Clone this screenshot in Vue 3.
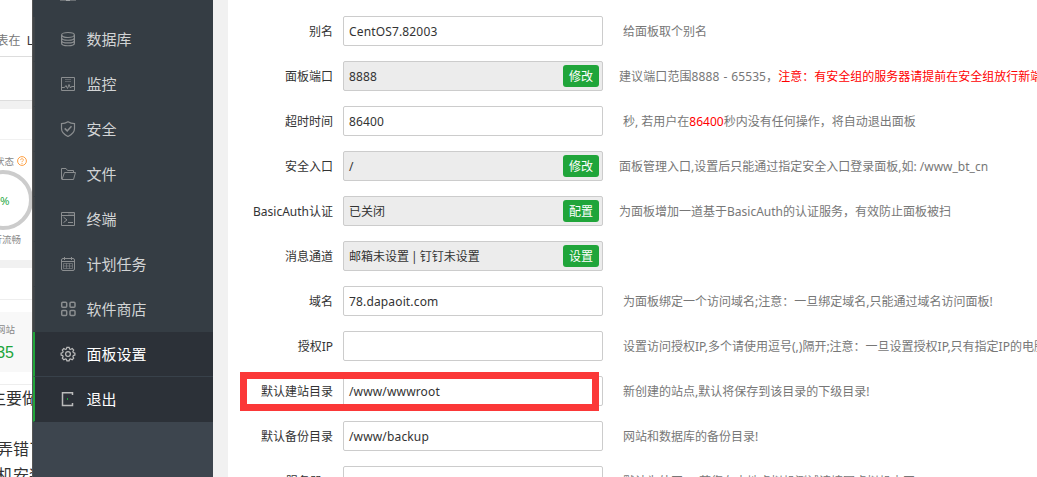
<script setup>
const menus = [
  { name: '数据库', icon: 'database' },
  { name: '监控', icon: 'monitor' },
  { name: '安全', icon: 'shield' },
  { name: '文件', icon: 'folder' },
  { name: '终端', icon: 'terminal' },
  { name: '计划任务', icon: 'calendar' },
  { name: '软件商店', icon: 'store' },
  { name: '面板设置', icon: 'gear', active: true },
  { name: '退出', icon: 'exit', active: true }
]

const rows = [
  { label: '别名', value: 'CentOS7.82003', latin: true, tips: [{ text: '给面板取个别名' }] },
  {
    label: '面板端口',
    value: '8888',
    latin: true,
    btn: '修改',
    tips: [{ text: '建议端口范围8888 - 65535，', wide: true }, { text: '注意：有安全组的服务器请提前在安全组放行新端口', red: true }]
  },
  {
    label: '超时时间',
    value: '86400',
    latin: true,
    tips: [{ text: '秒, 若用户在' }, { text: '86400', red: true }, { text: '秒内没有任何操作，将自动退出面板' }]
  },
  { label: '安全入口', value: '/', latin: true, btn: '修改', tips: [{ text: '面板管理入口,设置后只能通过指定安全入口登录面板,如: /www_bt_cn' }] },
  { label: 'BasicAuth认证', value: '已关闭', btn: '配置', tips: [{ text: '为面板增加一道基于BasicAuth的认证服务，有效防止面板被扫' }] },
  { label: '消息通道', value: '邮箱未设置 | 钉钉未设置', btn: '设置', tips: [] },
  { label: '域名', value: '78.dapaoit.com', latin: true, tips: [{ text: '为面板绑定一个访问域名;注意：一旦绑定域名,只能通过域名访问面板!' }] },
  { label: '授权IP', value: '', tips: [{ text: '设置访问授权IP,多个请使用逗号(,)隔开;注意：一旦设置授权IP,只有指定IP的电脑能访问面板!' }] },
  { label: '默认建站目录', value: '/www/wwwroot', latin: true, marked: true, tips: [{ text: '新创建的站点,默认将保存到该目录的下级目录!' }] },
  { label: '默认备份目录', value: '/www/backup', latin: true, tips: [{ text: '网站和数据库的备份目录!' }] },
  { label: '服务器IP', value: '', tips: [{ text: '默认为外网IP, 若您在本地虚拟机测试请填写虚拟机内网IP!' }] }
]
</script>

<template>
  <div class="page">
    <div class="behind">
      <div class="notice"><span>表在&nbsp; <b>L</b></span></div>
      <div class="blank"></div>
      <div class="gap"></div>
      <div class="panel-head"></div>
      <div class="status">
        <div class="status-title">
          <span>状态</span>
          <svg width="10" height="10" viewBox="0 0 10 10" fill="none" stroke="#ff9f40">
            <circle cx="5" cy="5" r="4.4" />
            <path d="M3.6 4.1c0-2 2.9-1.8 2.8 0C6.3 5 5 5 5 6.2M5 7v1" stroke-width=".9" />
          </svg>
        </div>
        <div class="ring"><span>0%</span></div>
        <div class="status-foot">运行流畅</div>
      </div>
      <div class="gap"></div>
      <div class="overview-head"></div>
      <div class="overview">
        <div class="site-label">网站</div>
        <div class="site-count">35</div>
      </div>
      <div class="article">
        <p class="line-a">主要做</p>
        <p class="line-b">弄错了</p>
        <p class="line-c">机安装</p>
      </div>
    </div>

    <div class="sidebar">
      <div class="menu-top">
        <svg width="16" height="2" viewBox="0 0 16 2"><path d="M0 0h16v1H0z" fill="#686d71" /><path d="M6 0h4v1H6z" fill="#a0a3a5" /></svg>
      </div>
      <div v-for="m in menus" :key="m.name" class="menu-item" :class="{ active: m.active }">
        <svg class="icon" width="16" height="16" viewBox="0 0 16 16" fill="none" stroke="currentColor">
          <g v-if="m.icon === 'database'" stroke-width="1.2">
            <ellipse cx="8" cy="4" rx="6.4" ry="2.5" />
            <path d="M1.6 4v8.2c0 3.4 12.8 3.4 12.8 0V4M1.6 6.7c0 3.4 12.8 3.4 12.8 0M1.6 9.4c0 3.4 12.8 3.4 12.8 0" />
          </g>
          <g v-else-if="m.icon === 'monitor'">
            <path d="M1.5 1.5h13v13h-13z" />
            <path d="M5 3.5h6M5 5.5h6" opacity=".5" />
            <path d="M2 11.5h2.500l1.500-2 1.500 3 1.500-4 1.500 3.500 1-1.500H14" />
          </g>
          <g v-else-if="m.icon === 'shield'" stroke-width="1.2">
            <path d="M8 .8c2 1.300 4 1.800 6.500 1.800v5c0 3.900-3 6.300-6.500 7.900C4.500 13.900 1.500 11.500 1.500 7.600v-5C4 2.600 6 2.100 8 .8z" />
            <path d="M4.700 7.400l2.500 2.500 4.300-4.700" stroke-width="1.500" />
          </g>
          <g v-else-if="m.icon === 'folder'">
            <path d="M2 13.500l-.5-.5V2.500H6l1.500 2h6v2M2 13.500l2.500-7h11l-2 7z" />
          </g>
          <g v-else-if="m.icon === 'terminal'">
            <path d="M1.500 1.500h13v13h-13zM1.500 4.500h13M8 11.500h5" />
            <path d="M3.500 6.200L7 8.900l-3.500 2.700" />
            <path d="M8.500 3h1M10.500 3h1M12.500 3h1" />
          </g>
          <g v-else-if="m.icon === 'calendar'">
            <rect x="1.500" y="2.500" width="13" height="12" rx="1.500" />
            <path d="M4.500 1v3M11.500 1v3M1.500 5.500h13" />
            <path d="M3.500 7.500h9v5h-9zM3.500 10h9M6.500 7.500v5M9.500 7.500v5" opacity=".6" />
          </g>
          <g v-else-if="m.icon === 'store'" stroke-width="1.500">
            <rect x="1.700" y="1.200" width="5" height="5" rx="1" />
            <rect x="10" y="1.200" width="5" height="5" rx="1" />
            <rect x="1.700" y="9.500" width="5" height="5" rx="1" />
            <rect x="10" y="9.500" width="5" height="5" rx="1" />
          </g>
          <g v-else-if="m.icon === 'gear'" stroke-width="1.200">
            <path d="M6.900 1.300h2.200l.5 1.700 1 .4 1.600-.9 1.500 1.500-.8 1.600.4 1 1.600.5v2l-1.600.5-.4 1 .8 1.600-1.500 1.500-1.600-.8-1 .4-.5 1.500H6.900l-.5-1.500-1-.4-1.600.8-1.500-1.500.8-1.600-.4-1-1.600-.5v-2l1.600-.5.4-1-.8-1.600 1.500-1.500 1.600.9 1-.4z" />
            <circle cx="8" cy="8.100" r="2.400" />
          </g>
          <g v-else>
            <path d="M12.500 4V1.700h-10v12.800h10V12" stroke-width="1.500" />
            <path d="M7.500 7v2" stroke="#20a53a" />
          </g>
        </svg>
        <span>{{ m.name }}</span>
      </div>
    </div>

    <div class="content">
      <div v-for="r in rows" :key="r.label" class="row">
        <span class="label">{{ r.label }}</span>
        <div class="field" :class="{ disabled: r.btn }">
          <span class="value" :class="{ latin: r.latin }">{{ r.value }}</span>
          <button v-if="r.btn">{{ r.btn }}</button>
        </div>
        <div class="tip" :class="{ near: r.btn }">
          <span v-for="(t, i) in r.tips" :key="i" :class="{ red: t.red, wide: t.wide }">{{ t.text }}</span>
        </div>
        <div v-if="r.marked" class="mark"></div>
      </div>
    </div>
  </div>
</template>

<style>
body {
  margin: 0;
  overflow: hidden;
}
</style>

<style scoped>
.page {
  display: flex;
  width: 1037px;
  height: 477px;
  overflow: hidden;
  background: #f1f1f1;
  font-family: "Noto Sans", "Noto Sans CJK SC", sans-serif;
  font-size: 12px;
  color: #333;
}
.page * {
  box-sizing: border-box;
}

/* page showing behind the menu */
.behind {
  width: 32px;
  height: 477px;
  flex: none;
  overflow: hidden;
  background: #fff;
  white-space: nowrap;
}
.notice {
  display: flex;
  justify-content: flex-end;
  height: 57px;
  padding-top: 32px;
  line-height: 17px;
  color: #777;
  border-bottom: 1px solid #ddd;
}
.notice span {
  margin-right: -1px;
}
.notice b {
  font-weight: 400;
  color: #333;
}
.blank {
  height: 44px;
  border-bottom: 1px solid #ddd;
}
.gap {
  height: 8px;
  background: #f1f1f1;
}
.panel-head {
  height: 31px;
  border-bottom: 1px solid #f1f1f1;
}
.status {
  height: 120px;
  padding-top: 14px;
}
.status-title {
  display: flex;
  align-items: center;
  justify-content: flex-end;
  gap: 3px;
  height: 14px;
  width: 27px;
  font-size: 9.5px;
  color: #888;
}
.status-title svg {
  flex: none;
}
.ring {
  width: 60px;
  height: 60px;
  margin: 2px 0 0 -27px;
  padding-right: 3px;
  border: 4px solid #ccc;
  border-radius: 50%;
  display: flex;
  align-items: center;
  justify-content: center;
  color: #20a53a;
  font-family: "Open Sans", sans-serif;
  font-size: 11.5px;
}
.status-foot {
  display: flex;
  justify-content: flex-end;
  width: 21px;
  height: 20px;
  line-height: 20px;
  font-size: 9.5px;
  color: #888;
}
.overview-head {
  height: 32px;
  border-bottom: 1px solid #eee;
  margin-bottom: 12px;
}
.overview {
  width: 32px;
  height: 60px;
  padding-top: 10px;
  background: #f8f8f8;
}
.site-label {
  display: flex;
  justify-content: flex-end;
  width: 15px;
  font-size: 9.5px;
  line-height: 16px;
  color: #888;
}
.site-count {
  display: flex;
  justify-content: flex-end;
  width: 14px;
  font-family: "Liberation Sans", sans-serif;
  font-size: 16px;
  line-height: 29px;
  color: #20a53a;
}
.article {
  margin-top: 12px;
  border-top: 1px solid #eee;
  font-size: 16px;
  line-height: 26px;
}
.article p {
  margin: 0;
}
.article .line-a {
  margin-left: -10px;
}
.article .line-b {
  margin: 25px 0 0 -3px;
}
.article .line-c {
  margin-left: -3px;
}

.sidebar {
  width: 181px;
  flex: none;
  background: #3d454e;
  border-left: 1px solid #565656;
}
.menu-top {
  height: 17px;
  padding-left: 27px;
  background: #353d44;
}
.menu-top svg {
  display: block;
}
.menu-item {
  display: flex;
  align-items: center;
  gap: 11px;
  height: 45px;
  padding: 0 0 1px 25px;
  border-left: 2px solid #3f4448;
  border-bottom: 1px solid #353d44;
  background: #353d44;
  color: #d2d4d5;
  font-size: 15px;
}
.menu-item span {
  margin: -1px 0 0 -0.5px;
}
.icon {
  flex: none;
  color: #8b8e90;
}
.menu-item.active {
  background: #2c3138;
  border-left-color: #20a53a;
  border-bottom-color: #38414a;
  color: #fff;
}
.menu-item.active:last-child {
  border-bottom-color: #2c3138;
}
.active .icon {
  color: #bbb;
}

.content {
  flex: 1;
  min-width: 0;
  margin-left: 15px;
  padding-top: 8px;
  background: #fff;
  overflow: hidden;
}
.row {
  position: relative;
  display: flex;
  align-items: center;
  height: 45px;
  white-space: nowrap;
}
.label {
  width: 105px;
  flex: none;
  text-align: right;
}
.field {
  display: flex;
  align-items: center;
  justify-content: space-between;
  width: 260px;
  height: 30px;
  flex: none;
  margin-left: 10px;
  padding: 0 3px 0 5px;
  border: 1px solid #ccc;
  border-radius: 2px;
}
.field.disabled {
  background: #ececec;
}
.value {
  word-spacing: -1px;
}
.value.latin {
  padding-top: 2px;
  letter-spacing: 0.15px;
}
.field button {
  width: 36px;
  height: 22px;
  padding: 0;
  border: 0;
  border-radius: 3px;
  background: #20a53a;
  color: #fff;
  font: inherit;
}
.tip {
  margin-left: 20px;
  color: #777;
}
.tip.near {
  margin-left: 16px;
}
.red {
  color: #f00;
}
.wide {
  letter-spacing: 0.1px;
  word-spacing: 0.7px;
}
.mark {
  position: absolute;
  left: 12px;
  top: 4px;
  width: 359px;
  height: 39px;
  border: 7px solid #fb3838;
}
</style>
